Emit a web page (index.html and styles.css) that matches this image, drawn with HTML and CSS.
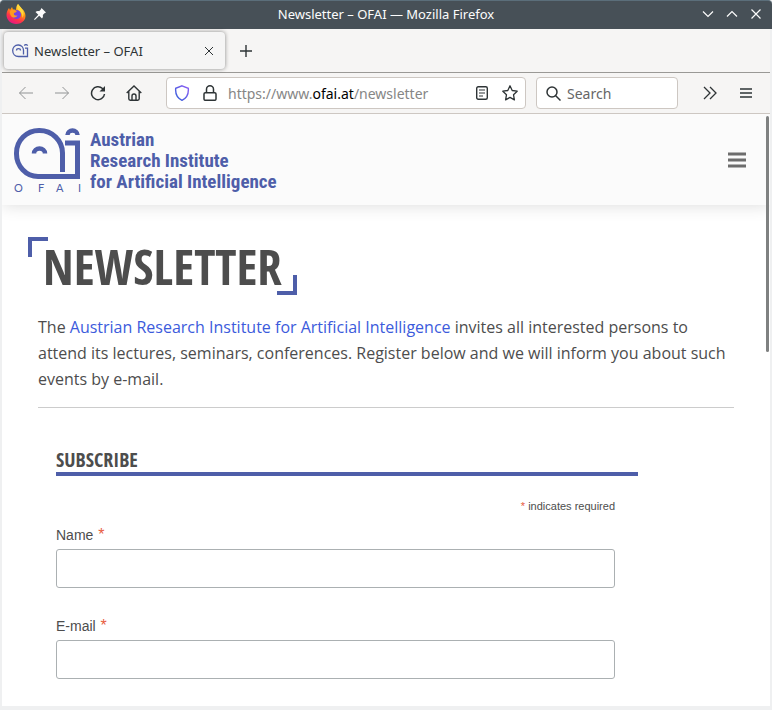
FILE: index.html
```html
<!DOCTYPE html>
<html lang="en">
<head>
    <meta charset="utf-8">
    <title>Newsletter – OFAI</title>
    <link rel="stylesheet" href="styles.css">
</head>
<body>
<div class="window">
    <div class="titlebar">
        <div class="title-left">
            <svg width="20" height="20" viewBox="0 0 20 20">
                <defs>
                    <linearGradient id="fox" x1="0.8" y1="0" x2="0.3" y2="1">
                        <stop offset="0" stop-color="#fff44f"/>
                        <stop offset="0.4" stop-color="#ff980e"/>
                        <stop offset="0.7" stop-color="#ff3647"/>
                        <stop offset="1" stop-color="#e31587"/>
                    </linearGradient>
                </defs>
                <path fill="url(#fox)" d="M12 0c1 2 3 3 4 5 1 0 1 1 2 2 2 3 2 7 0 9.500-2 2.500-5 3.500-8 3.500-5 0-9.500-4-9.500-9 0-3 1-5 2.500-7l1 2 2-3 1 2.500c1 0 2 0 3 .5C10 4 10.500 1.500 12 0z"/>
                <circle cx="10.500" cy="10.500" r="4.500" fill="#7542e5"/>
                <path fill="#ff9a1f" d="M4 7c2-1.500 4-1.500 6-.5 1 .5 1 1.500-.5 2-1.500.3-2 1-1.500 2 .5 1 2 1.500 3.500.8-1 2.500-4.500 3.200-6.500.7C4 10.500 3.500 8.500 4 7z"/>
                <path fill="#ffd83d" d="M12 0c1 2 3 3 4 5 2 3 2 6 .5 9 0-4-1.500-6-3.500-7.500-1.500-1-2.500-2.500-1-6.500z"/>
            </svg>
            <svg width="12" height="12" viewBox="0 0 12 12" fill="#fcfcfc">
                <path d="M7.500 0L12 4.500l-1.500 .7-1.700 1.700c.4 1.500 0 2.600-.8 3.600L5.200 7.700.8 12 0 11.200 4.300 6.800 1.500 4c1-.8 2.100-1.200 3.600-.8l1.700-1.700z"/>
            </svg>
        </div>
        <div class="title-text">Newsletter – OFAI — Mozilla Firefox</div>
        <div class="title-buttons">
            <button aria-label="Minimize"><svg width="12" height="12" viewBox="0 0 12 12"><path d="M1 3.500l5 5 5-5"/></svg></button>
            <button aria-label="Maximize"><svg width="12" height="12" viewBox="0 0 12 12"><path d="M1 8.500l5-5 5 5"/></svg></button>
            <button aria-label="Close"><svg width="12" height="12" viewBox="0 0 12 12"><path d="M1.500 1.500l9 9M10.500 1.500l-9 9"/></svg></button>
        </div>
    </div>

    <div class="tabbar">
        <div class="tab">
            <svg width="17" height="14" viewBox="0 0 17 14" fill="none" stroke="#4e5ea9" stroke-width="1.300">
                <path d="M11.500 10.500V6.500A5.400 5.400 0 0 0 6.500 1H6A5.300 5.300 0 0 0 .7 6.500C.7 10 3 12.500 6.500 12.500H15.500V4.200H13"/>
                <path d="M4.500 6.500a2 1.800 0 0 1 4 0M12.500 1.800a1.500 1.200 0 0 1 3 0"/>
            </svg>
            <span class="tab-title">Newsletter – OFAI</span>
            <button aria-label="Close tab"><svg width="8" height="8" viewBox="0 0 8 8"><path d="M0 0l8 8M8 0l-8 8"/></svg></button>
        </div>
        <button aria-label="New tab"><svg width="12" height="12" viewBox="0 0 12 12"><path d="M6 0v12M0 6h12" stroke-width="1.400"/></svg></button>
    </div>

    <div class="toolbar">
        <div class="nav-buttons">
            <button class="off" aria-label="Back"><svg width="16" height="16" viewBox="0 0 16 16"><path d="M15 8H1.500M7.500 2L1.500 8l6 6"/></svg></button>
            <button class="off" aria-label="Forward"><svg width="16" height="16" viewBox="0 0 16 16"><path d="M1 8h13.500M8.500 2l6 6-6 6"/></svg></button>
            <button aria-label="Reload"><svg width="16" height="16" viewBox="0 0 16 16"><path stroke-width="1.500" d="M14.500 9A6.500 6.500 0 1 1 12.500 3.500L13.500 4.500"/><path fill="#2e3436" stroke="none" d="M15 1v5.500H9.500z"/></svg></button>
            <button aria-label="Home"><svg width="16" height="16" viewBox="0 0 16 16"><path stroke-width="1.400" d="M.7 8L8 1l7.300 7M2.800 6.500v7.300q0 1.400 1.400 1.400h7.600q1.400 0 1.400-1.400V6.500M6 15v-4a2 2 0 0 1 4 0v4"/></svg></button>
        </div>
        <div class="urlbar">
            <svg width="16" height="16" viewBox="0 0 16 16">
                <defs>
                    <linearGradient id="shield" x1="0" y1="1" x2="1" y2="0">
                        <stop offset="0" stop-color="#2f5fd8"/>
                        <stop offset="1" stop-color="#8f5cf5"/>
                    </linearGradient>
                </defs>
                <path stroke="url(#shield)" stroke-width="1.400" d="M8 .8l6.300 2.500c.5 5.500-1.300 9.500-6.300 12-5-2.500-6.800-6.500-6.300-12z"/>
            </svg>
            <svg width="14" height="16" viewBox="0 0 14 16"><path stroke-width="1.500" d="M2.300 7.700h9.400q1.300 0 1.300 1.300v5q0 1.300-1.300 1.300H2.300Q1 15.300 1 14V9q0-1.300 1.300-1.300zM3.500 7.500V4.300a3.500 3.500 0 0 1 7 0v3.200"/></svg>
            <div class="url">https://www.<b>ofai.at</b>/newsletter</div>
            <button aria-label="Reader view"><svg width="12" height="14" viewBox="0 0 12 14"><rect x=".7" y=".7" width="10.600" height="12.600" rx="1.500" stroke-width="1.400"/><path stroke-width="1.200" d="M3 4h6M3 7h6M3 10h4"/></svg></button>
            <button aria-label="Bookmark"><svg width="16" height="16" viewBox="0 0 16 16"><path stroke-width="1.300" stroke-linejoin="round" d="M8 .8l2.200 4.700 5 .7-3.700 3.500.9 5.200L8 12.400l-4.400 2.500.9-5.200L.8 6.200l5-.7z"/></svg></button>
        </div>
        <div class="searchbar">
            <svg width="15" height="15" viewBox="0 0 15 15"><circle cx="6" cy="6" r="5" stroke-width="1.500"/><path stroke-width="1.500" d="M9.500 9.500l5 5"/></svg>
            <input type="text" placeholder="Search" aria-label="Search">
        </div>
        <div class="tool-right">
            <button aria-label="More tools"><svg width="14" height="14" viewBox="0 0 14 14"><path stroke-width="1.300" d="M1 1l6 6-6 6M7 1l6 6-6 6"/></svg></button>
            <button aria-label="Menu"><svg width="12" height="10" viewBox="0 0 12 10"><path stroke-width="1.300" d="M0 1h12M0 5h12M0 9h12"/></svg></button>
        </div>
    </div>

    <div class="page">
        <header class="site-header">
            <a class="logo" href="#" aria-label="OFAI">
                <svg width="67" height="65" viewBox="0 0 67 65" fill="none" stroke="#4e5ea9">
                    <path stroke-width="5" d="M48.500 44V25A23 22.500 0 0 0 25.500 2.500H25A22.500 22.500 0 0 0 2.500 25v1C2.500 38 12 48.500 24 48.500H63.500V15H51"/>
                    <path stroke-width="4.500" d="M20 25.500A5.500 5 0 0 1 31 25.500M53.500 7A5 4.500 0 0 1 63.500 7"/>
                    <g class="logo-letters">
                        <text x="0" y="64">O</text>
                        <text x="24" y="64">F</text>
                        <text x="42" y="64">A</text>
                        <text x="64" y="64">I</text>
                    </g>
                </svg>
                <span class="logo-name">Austrian<br>Research Institute<br>for Artificial Intelligence</span>
            </a>
            <button class="menu" aria-label="Site menu"><svg width="18" height="16" viewBox="0 0 18 16"><path d="M0 2h18M0 8h18M0 14h18"/></svg></button>
        </header>

        <main>
            <h1>Newsletter</h1>
            <p>The <a href="#">Austrian Research Institute for Artificial Intelligence</a> invites all interested persons to attend its lectures, seminars, conferences. Register below and we will inform you about such events by e-mail.</p>
            <hr>
            <form class="subscribe">
                <h2>Subscribe</h2>
                <div class="fields">
                    <div class="required"><span class="star">*</span> indicates required</div>
                    <label for="name">Name <span class="star">*</span></label>
                    <input type="text" id="name">
                    <label for="email">E-mail <span class="star">*</span></label>
                    <input type="email" id="email">
                </div>
            </form>
        </main>
        <div class="scroll-thumb"></div>
    </div>
</div>
</body>
</html>
```
FILE: styles.css
```css
*, *::before, *::after { box-sizing: border-box; }
body { margin: 0; background: #eff0f1; font-family: "Noto Sans", sans-serif; color: #4d4d4d; }
button { display: flex; align-items: center; justify-content: center; padding: 0; border: 0; background: none; }
svg { display: block; flex: none; }

/* browser window */
.window { display: flex; flex-direction: column; height: 100vh; overflow: hidden; }

.titlebar { display: grid; grid-template-columns: 1fr auto 1fr; align-items: center; height: 29px; padding: 0 10px 2px; background: #475057; border-top: 1px solid #5b6e7a; border-radius: 4px 4px 0 0; color: #fcfcfc; font-size: 13px; }
.title-left { display: flex; align-items: center; gap: 8px; margin-left: -4px; }
.title-buttons { display: flex; justify-content: flex-end; gap: 12px; }
.title-buttons path { fill: none; stroke: #fcfcfc; stroke-width: 1.2; }

.tabbar { display: flex; align-items: center; gap: 15px; height: 44px; margin: 0 2px; background: #f6f5f4; border-bottom: 1px solid #9a9996; }
.tabbar button path { fill: none; stroke: #2e3436; }
.tab { display: flex; align-items: center; width: 221px; height: 37px; margin-left: 2px; padding: 0 12px 0 8px; background: #f5f5f5; border-radius: 4px; box-shadow: 0 0 4px rgba(0, 0, 0, .45); color: #2e3436; font-size: 13px; }
.tab-title { flex: 1; margin-left: 5px; }

.toolbar { display: flex; align-items: center; height: 41px; margin: 0 2px; background: #f6f5f4; border-bottom: 1px solid #cdc7c2; }
.toolbar svg { fill: none; stroke: #2e3436; }
.nav-buttons { display: flex; gap: 20px; margin: 0 24px 0 16px; }
.nav-buttons .off { opacity: .5; }
.urlbar { display: flex; align-items: center; flex: 1; height: 32px; padding: 0 7px; background: #fff; border: 1px solid #cdc7c2; border-radius: 4px; }
.urlbar svg + svg { margin-left: 13px; }
.url { flex: 1; margin-left: 11px; font-size: 14px; color: #868686; white-space: nowrap; }
.url b { font-weight: normal; color: #000; }
.urlbar button + button { margin-left: 14px; }
.searchbar { display: flex; align-items: center; gap: 6px; width: 142px; height: 32px; margin-left: 10px; padding: 0 9px; background: #fff; border: 1px solid #cdc7c2; border-radius: 4px; }
.searchbar input { width: 100%; min-width: 0; padding: 0; border: 0; outline: 0; background: none; font: 14px "Noto Sans", sans-serif; }
.searchbar input::placeholder { color: #666; }
.tool-right { display: flex; gap: 23px; margin: 0 18px 0 25px; }

/* page content */
.page { position: relative; flex: 1; min-height: 0; margin: 0 2px 4px; background: #fff; overflow: hidden; }
.scroll-thumb { position: absolute; top: 2px; right: 1px; width: 3px; height: 236px; border-radius: 2px; background: #7f8181; }

.site-header { display: flex; align-items: center; justify-content: space-between; height: 91px; padding: 1px 24px 0 12px; background: #fbfbfb; box-shadow: 0 0 16px rgba(0, 0, 0, .15); }
.logo { display: flex; align-items: center; gap: 9px; color: #4e5ea9; text-decoration: none; }
.logo-letters { fill: #4e5ea9; stroke: none; font: 11px Lato, sans-serif; }
.logo-name { font: bold 19px/21px "Roboto Condensed", sans-serif; }
.menu path { stroke: #6d6d6d; stroke-width: 3; }

main { padding: 32px 36px 0; font-family: "Open Sans", sans-serif; }
h1, h2 { margin: 0; font-family: "Open Sans Condensed", "Roboto Condensed", sans-serif; font-weight: bold; text-transform: uppercase; color: #4d4d4d; }
h1 { position: relative; width: fit-content; margin-left: -10px; padding: 0 15px; font-size: 49px; line-height: 58px; }
h1::before, h1::after { content: ""; position: absolute; width: 20px; height: 20px; border: 0 solid #4e5ea9; }
h1::before { top: 0; left: 0; border-width: 4px 0 0 4px; }
h1::after { right: 0; bottom: 0; border-width: 0 4px 4px 0; }
main p { margin: 19px 0 15px; font-size: 16px; line-height: 26px; }
main p a { color: #3c5bdc; text-decoration: none; }
hr { margin: 0; border: 0; border-top: 1px solid #ccc; }

.subscribe { width: 582px; max-width: 100%; margin: 40px 0 0 18px; font-family: "Liberation Sans", sans-serif; }
h2 { border-bottom: 4px solid #4e5ea9; font-size: 20px; line-height: 24px; }
.fields { margin-right: 23px; }
.required { margin: 22px 0 10px; font-size: 11px; line-height: 16px; text-align: right; }
.fields label { display: block; font-size: 14px; line-height: 22px; }
.fields label .star { margin-left: 1px; font-size: 16px; }
.star { color: #e85c41; }
.fields input { display: block; width: 100%; height: 39px; margin: 3px 0 27px; padding: 0 8px; border: 1px solid #abb0b2; border-radius: 3px; background: #fff; font-size: 15px; }
```
